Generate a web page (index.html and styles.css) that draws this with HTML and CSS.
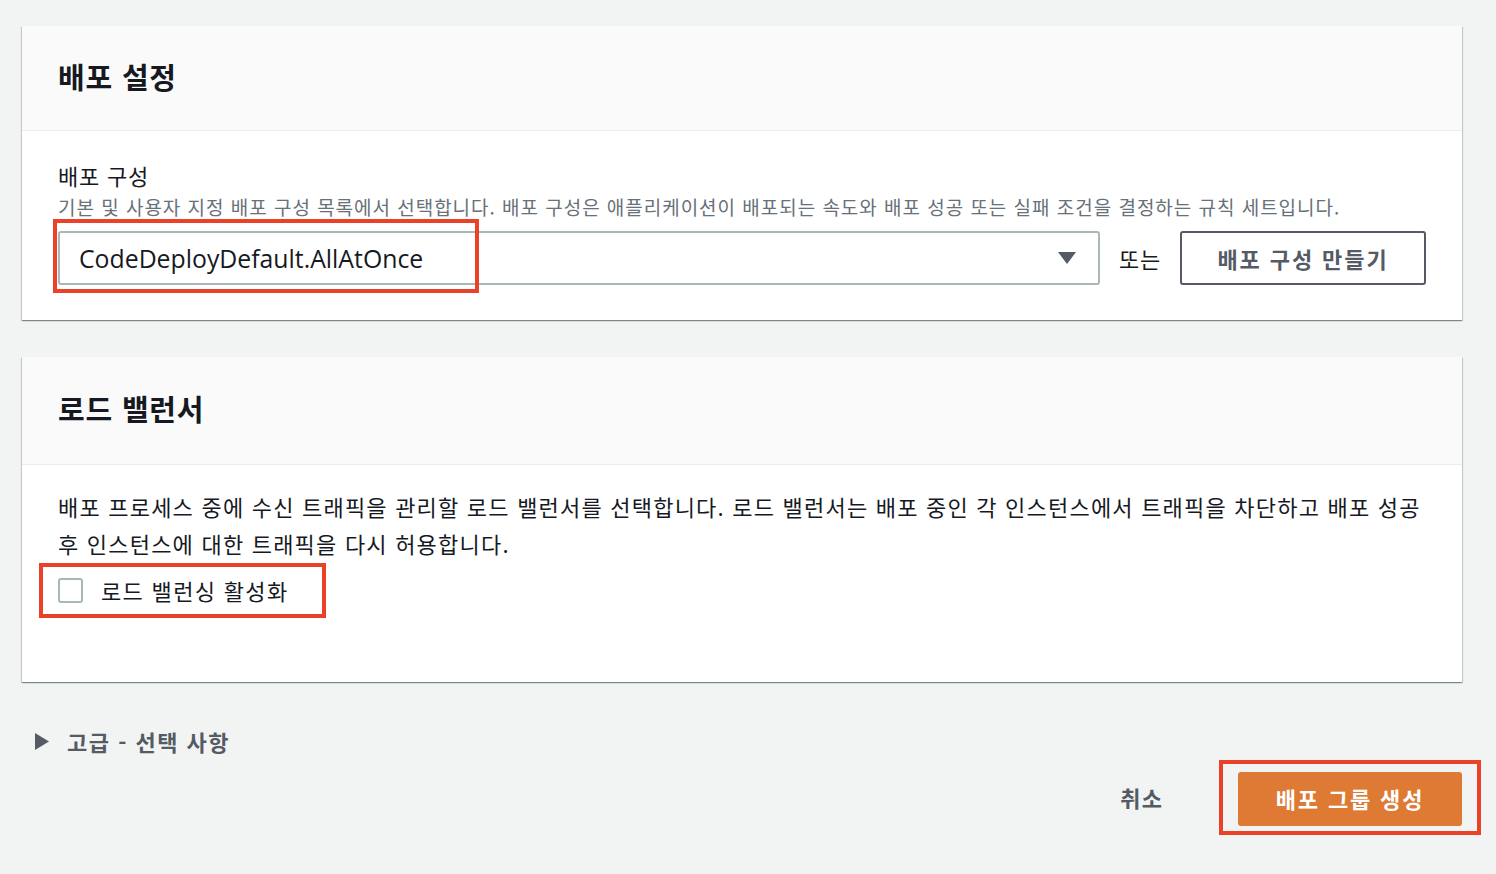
FILE: index.html
```html
<!DOCTYPE html>
<html lang="ko">
<head>
<meta charset="utf-8">
<title>배포 그룹 생성</title>
<link rel="stylesheet" href="styles.css">
</head>
<body>
<main class="page">
  <section class="card card-deploy">
    <header class="card-header"><h2 class="card-title">배포 설정</h2></header>
    <div class="card-body body-deploy">
      <div class="field-label">배포 구성</div>
      <div class="field-desc">기본 및 사용자 지정 배포 구성 목록에서 선택합니다. 배포 구성은 애플리케이션이 배포되는 속도와 배포 성공 또는 실패 조건을 결정하는 규칙 세트입니다.</div>
      <div class="select-row">
        <div class="select">
          <span class="select-value">CodeDeployDefault.AllAtOnce</span>
          <svg class="select-caret" width="18" height="12" viewBox="0 0 18 12"><polygon points="0,0 18,0 9,12" fill="#545b64"/></svg>
          <span class="mark mark-select"></span>
        </div>
        <span class="or-text">또는</span>
        <button class="btn-normal">배포 구성 만들기</button>
      </div>
    </div>
  </section>

  <section class="card card-lb">
    <header class="card-header header-lb"><h2 class="card-title">로드 밸런서</h2></header>
    <div class="card-body body-lb">
      <p class="lb-text">배포 프로세스 중에 수신 트래픽을 관리할 로드 밸런서를 선택합니다. 로드 밸런서는 배포 중인 각 인스턴스에서 트래픽을 차단하고 배포 성공 후 인스턴스에 대한 트래픽을 다시 허용합니다.</p>
      <label class="check-row">
        <span class="checkbox"></span>
        <span class="check-label">로드 밸런싱 활성화</span>
        <span class="mark mark-check"></span>
      </label>
    </div>
  </section>

  <div class="expander">
    <svg class="expander-caret" width="14" height="17" viewBox="0 0 14 17"><polygon points="0,0 14,8.5 0,17" fill="#545b64"/></svg>
    <span class="expander-text">고급 - 선택 사항</span>
  </div>

  <div class="footer">
    <button class="btn-link">취소</button>
    <div class="primary-wrap">
      <button class="btn-primary">배포 그룹 생성</button>
      <span class="mark mark-primary"></span>
    </div>
  </div>
</main>
</body>
</html>
```

FILE: styles.css
```css
* { box-sizing: border-box; }

html, body {
  margin: 0;
  padding: 0;
  background: #f2f3f3;
}

body {
  font-family: "Noto Sans CJK KR", "Noto Sans", sans-serif;
  color: #16191f;
  letter-spacing: 0.05em;
  word-break: keep-all;
}

.page {
  padding: 26px 34px 48px 22px;
}

.card {
  background: #ffffff;
  box-shadow: 0 1px 1px 0 rgba(0, 28, 36, 0.3), 1px 1px 1px 0 rgba(0, 28, 36, 0.15), -1px 1px 1px 0 rgba(0, 28, 36, 0.15);
}

.card-lb {
  margin-top: 37px;
}

.card-header {
  background: #fafafa;
  border-bottom: 1px solid #eaeded;
  padding: 32px 36px 36px;
}

.header-lb {
  padding: 33px 36px 38px;
}

.card-title {
  margin: 0;
  font-size: 29px;
  line-height: 36px;
  font-weight: 700;
  color: #16191f;
}

.card-body {
  padding: 29px 36px 35px;
}

.field-label {
  font-size: 22px;
  line-height: 30px;
}

.field-desc {
  margin-top: 5px;
  font-size: 19px;
  line-height: 24px;
  letter-spacing: 0.97px;
  color: #687078;
}

.select-row {
  margin-top: 12px;
  display: flex;
  align-items: center;
  gap: 19px;
}

.select {
  position: relative;
  flex: 1;
  height: 54px;
  border: 2px solid #aab7b8;
  border-radius: 3px;
  display: flex;
  align-items: center;
  justify-content: space-between;
  padding: 0 22px 0 19px;
}

.select-value {
  font-family: "Open Sans", "Noto Sans", sans-serif;
  font-size: 24.8px;
  letter-spacing: 0;
  color: #16191f;
}

.or-text {
  font-size: 22px;
}

.btn-normal {
  width: 246px;
  height: 54px;
  background: #ffffff;
  border: 2px solid #545b64;
  border-radius: 3px;
  font-family: inherit;
  font-size: 22px;
  font-weight: 700;
  letter-spacing: 1.9px;
  color: #545b64;
  padding: 0;
}

.body-lb {
  padding: 23px 36px 77px;
}

.lb-text {
  margin: 0;
  font-size: 22px;
  line-height: 37px;
  letter-spacing: 0.055em;
}

.check-row {
  position: relative;
  margin-top: 13px;
  height: 30px;
  display: flex;
  align-items: center;
  gap: 18px;
}

.checkbox {
  width: 25px;
  height: 25px;
  border: 2px solid #aab7b8;
  border-radius: 3px;
  background: #ffffff;
}

.check-label {
  font-size: 22px;
  letter-spacing: 0.06em;
}

.expander {
  margin-top: 44px;
  margin-left: 13px;
  height: 30px;
  display: flex;
  align-items: center;
  gap: 18px;
}

.expander-text {
  font-size: 22px;
  font-weight: 700;
  letter-spacing: 1.5px;
  color: #545b64;
}

.footer {
  margin-top: 16px;
  display: flex;
  justify-content: flex-end;
  align-items: center;
  gap: 75px;
}

.btn-link {
  background: none;
  border: none;
  padding: 0 0 4px;
  font-family: inherit;
  font-size: 22px;
  font-weight: 700;
  letter-spacing: 0.05em;
  color: #545b64;
}

.primary-wrap {
  position: relative;
}

.btn-primary {
  display: block;
  width: 224px;
  height: 54px;
  background: #de7a34;
  border: none;
  border-radius: 3px;
  font-family: inherit;
  font-size: 22px;
  font-weight: 700;
  letter-spacing: 1.85px;
  color: #ffffff;
  padding: 0 0 2px;
}

.mark {
  position: absolute;
  border: 4px solid #ea4129;
  pointer-events: none;
}

.mark-select {
  left: -7px;
  top: -14px;
  width: 426px;
  height: 74px;
}

.mark-check {
  left: -19px;
  top: -12px;
  width: 287px;
  height: 55px;
}

.mark-primary {
  left: -19px;
  top: -12px;
  width: 262px;
  height: 75px;
}
```
